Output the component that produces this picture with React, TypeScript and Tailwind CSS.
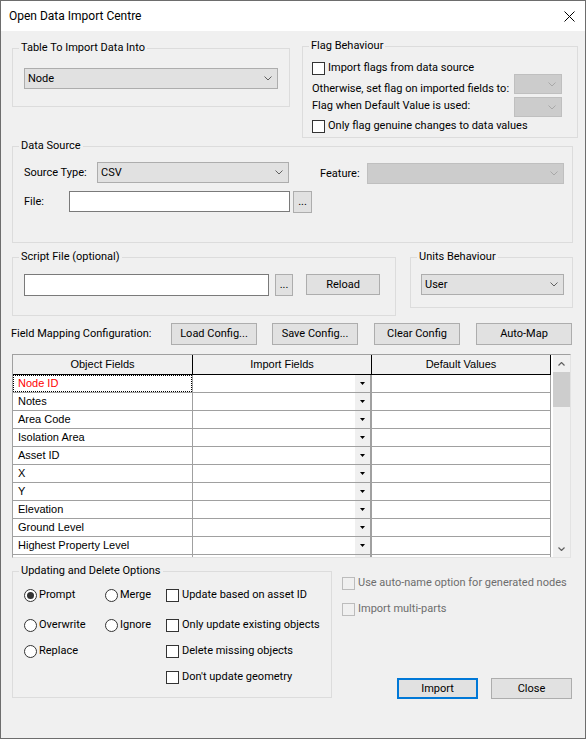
import React from "react";

const Chevron = ({ color = "#606060" }: { color?: string }) => (
  <svg width="8" height="5" viewBox="0 0 8 5" className="shrink-0">
    <path d="M0.5 0.5 L4 4 L7.5 0.5" fill="none" stroke={color} strokeWidth="1" />
  </svg>
);

function Combo({ className, text, disabled }: { className: string; text?: string; disabled?: boolean }) {
  return (
    <div
      className={
        "flex items-center justify-between border pl-[3px] pr-[5px] shrink-0 " +
        (disabled ? "bg-[#cccccc] border-[#bfbfbf] " : "bg-[#e1e1e1] border-[#adadad] ") +
        className
      }
    >
      <span className="leading-[16px] text-black">{text}</span>
      <Chevron color={disabled ? "#a8a8a8" : "#606060"} />
    </div>
  );
}

function Button({ className, children }: { className: string; children: React.ReactNode }) {
  return (
    <div
      className={
        "flex items-center justify-center bg-[#e1e1e1] border border-[#adadad] shrink-0 leading-[16px] " + className
      }
    >
      {children}
    </div>
  );
}

function Check({ label, className = "", disabled }: { label: string; className?: string; disabled?: boolean }) {
  return (
    <div className={"flex items-center h-[16px] " + className}>
      <div
        className={
          "w-[13px] h-[13px] border shrink-0 " +
          (disabled ? "border-[#bcbcbc] bg-[#f0f0f0]" : "border-[#333333] bg-white")
        }
      />
      <span className={"ml-[3px] leading-[16px] whitespace-nowrap " + (disabled ? "text-[#6d6d6d]" : "text-black")}>
        {label}
      </span>
    </div>
  );
}

function Radio({ label, className = "", checked }: { label: string; className?: string; checked?: boolean }) {
  return (
    <div className={"flex items-center h-[16px] " + className}>
      <div className="w-[13px] h-[13px] rounded-full border border-[#333333] bg-white shrink-0 flex items-center justify-center">
        {checked && <div className="w-[7px] h-[7px] rounded-full bg-[#333333]" />}
      </div>
      <span className="ml-[2px] leading-[16px] whitespace-nowrap">{label}</span>
    </div>
  );
}

const rows = [
  "Node ID",
  "Notes",
  "Area Code",
  "Isolation Area",
  "Asset ID",
  "X",
  "Y",
  "Elevation",
  "Ground Level",
  "Highest Property Level",
  "",
];

function Grid() {
  return (
    <div className="ml-[11px] mt-[9px] w-[559px] h-[204px] border border-t-[#a0a0a0] border-l-[#a0a0a0] border-r-[#e3e3e3] border-b-[#e3e3e3] flex overflow-hidden [font-family:'Liberation_Sans',Arial,sans-serif] text-[11px] text-black">
      <div className="w-[538px] flex flex-col overflow-hidden bg-white shrink-0">
        <div className="flex h-[20px] border-b border-black bg-[#f0f0f0] shrink-0">
          <div className="w-[180px] border-r border-black flex items-center justify-center">Object Fields</div>
          <div className="w-[179px] border-r border-black flex items-center justify-center">Import Fields</div>
          <div className="w-[179px] border-r border-black flex items-center justify-center">Default Values</div>
        </div>
        {rows.map((r, i) => (
          <div key={i} className="flex h-[18px] border-b border-[#a0a0a0] shrink-0">
            <div className="w-[180px] border-r border-[#a0a0a0] flex">
              {i === 0 ? (
                <div className="w-full h-full border border-dotted border-black flex items-center pl-[4px] text-[#ff0000]">
                  {r}
                </div>
              ) : (
                <div className="w-full h-full flex items-center pl-[5px]">{r}</div>
              )}
            </div>
            <div className="w-[179px] border-r border-[#a0a0a0] flex justify-end">
              <div className="w-[16px] h-full bg-[#f0f0f0] border-r border-[#a0a0a0] flex items-center justify-center">
                <svg width="5" height="3" viewBox="0 0 5 3">
                  <polygon points="0,0 5,0 2.5,3" fill="#000" />
                </svg>
              </div>
            </div>
            <div className="w-[179px] border-r border-[#a0a0a0]" />
          </div>
        ))}
      </div>
      <div className="w-[2px] bg-white shrink-0" />
      <div className="w-[17px] bg-[#f0f0f0] flex flex-col shrink-0">
        <div className="h-[17px] flex items-center justify-center shrink-0">
          <svg width="7" height="4" viewBox="0 0 7 4">
            <path d="M0.5 3.5 L3.5 0.5 L6.5 3.5" fill="none" stroke="#606060" strokeWidth="1.2" />
          </svg>
        </div>
        <div className="h-[35px] bg-[#cdcdcd] shrink-0" />
        <div className="flex-1" />
        <div className="h-[17px] flex items-center justify-center shrink-0">
          <svg width="7" height="4" viewBox="0 0 7 4">
            <path d="M0.5 0.5 L3.5 3.5 L6.5 0.5" fill="none" stroke="#606060" strokeWidth="1.2" />
          </svg>
        </div>
      </div>
    </div>
  );
}

export default function App() {
  return (
    <div className="w-[586px] h-[739px] bg-[#f0f0f0] border border-[#6d6d6d] flex flex-col [font-family:Roboto,sans-serif] text-[11px] text-black overflow-hidden">
      {/* Title bar */}
      <div className="h-[30px] bg-white flex items-center justify-between pl-[8px] pr-[10px] shrink-0">
        <span className="text-[12px] leading-[16px]">Open Data Import Centre</span>
        <svg width="11" height="11" viewBox="0 0 11 11">
          <path d="M0.5 0.5 L10.5 10.5 M10.5 0.5 L0.5 10.5" stroke="#000" strokeWidth="1" />
        </svg>
      </div>

      {/* Row 1 */}
      <div className="flex items-start shrink-0">
        <fieldset className="ml-[11px] mt-[9px] w-[278px] h-[67px] border border-[#dcdcdc]">
          <legend className="ml-[6px] px-[2px] leading-[16px]">Table To Import Data Into</legend>
          <Combo className="ml-[11px] mt-[12px] w-[254px] h-[21px]" text="Node" />
        </fieldset>
        <fieldset className="ml-[12px] mt-[7px] w-[276px] h-[100px] border border-[#dcdcdc]">
          <legend className="ml-[6px] px-[2px] leading-[16px]">Flag Behaviour</legend>
          <div className="pl-[9px] pr-[15px] flex flex-col">
            <div className="mt-[6px]">
              <Check label="Import flags from data source" />
            </div>
            <div className="flex items-start h-[20px] mt-[-2px]">
              <span className="flex-1 leading-[16px] pt-[7px] whitespace-nowrap">
                Otherwise, set flag on imported fields to:
              </span>
              <Combo className="w-[48px] h-[20px]" disabled />
            </div>
            <div className="flex items-start h-[20px] mt-[3px]">
              <span className="flex-1 leading-[16px] pt-[1px] whitespace-nowrap">Flag when Default Value is used:</span>
              <Combo className="w-[48px] h-[20px]" disabled />
            </div>
            <div className="mt-[1px]">
              <Check label="Only flag genuine changes to data values" />
            </div>
          </div>
        </fieldset>
      </div>

      {/* Data Source */}
      <fieldset className="ml-[11px] mt-[0px] w-[561px] h-[105px] border border-[#dcdcdc] shrink-0">
        <legend className="ml-[6px] px-[2px] leading-[16px]">Data Source</legend>
        <div className="pl-[11px] flex flex-col">
          <div className="flex items-start mt-[8px]">
            <span className="w-[73px] leading-[21px] whitespace-nowrap">Source Type:</span>
            <Combo className="w-[192px] h-[21px]" text="CSV" />
            <span className="ml-[31px] w-[47px] leading-[21px] mt-[1px]">Feature:</span>
            <Combo className="w-[197px] h-[21px] mt-[1px]" disabled />
          </div>
          <div className="flex items-start mt-[7px]">
            <span className="w-[45px] leading-[21px]">File:</span>
            <div className="w-[221px] h-[21px] bg-white border border-[#7a7a7a]" />
            <Button className="ml-[3px] w-[19px] h-[22px]">...</Button>
          </div>
        </div>
      </fieldset>

      {/* Row 3 */}
      <div className="flex items-start mt-[6px] shrink-0">
        <fieldset className="ml-[11px] w-[384px] h-[67px] border border-[#dcdcdc]">
          <legend className="ml-[6px] px-[2px] leading-[16px]">Script File (optional)</legend>
          <div className="pl-[11px] flex items-start mt-[9px]">
            <div className="w-[245px] h-[22px] bg-white border border-[#7a7a7a]" />
            <Button className="ml-[6px] w-[18px] h-[22px]">...</Button>
            <Button className="ml-[13px] w-[74px] h-[21px]">Reload</Button>
          </div>
        </fieldset>
        <fieldset className="ml-[14px] w-[163px] h-[59px] border border-[#dcdcdc]">
          <legend className="ml-[6px] px-[2px] leading-[16px]">Units Behaviour</legend>
          <Combo className="ml-[10px] mt-[9px] w-[143px] h-[21px]" text="User" />
        </fieldset>
      </div>

      {/* Field mapping */}
      <div className="flex items-center h-[22px] mt-[7px] shrink-0">
        <span className="ml-[10px] w-[160px] leading-[16px] whitespace-nowrap">Field Mapping Configuration:</span>
        <Button className="w-[86px] h-[22px]">Load Config...</Button>
        <Button className="ml-[15px] w-[86px] h-[22px]">Save Config...</Button>
        <Button className="ml-[16px] w-[86px] h-[22px]">Clear Config</Button>
        <Button className="ml-[16px] w-[96px] h-[22px]">Auto-Map</Button>
      </div>

      <Grid />

      {/* Bottom */}
      <div className="flex items-start mt-[5px] shrink-0">
        <fieldset className="ml-[11px] w-[320px] h-[135px] border border-[#dcdcdc]">
          <legend className="ml-[6px] px-[2px] leading-[16px]">Updating and Delete Options</legend>
          <div className="flex pl-[11px]">
            <div className="w-[81px] flex flex-col">
              <Radio label="Prompt" checked className="mt-[8px]" />
              <Radio label="Overwrite" className="mt-[14px]" />
              <Radio label="Replace" className="mt-[10px]" />
            </div>
            <div className="w-[61px] flex flex-col">
              <Radio label="Merge" className="mt-[8px]" />
              <Radio label="Ignore" className="mt-[14px]" />
            </div>
            <div className="flex flex-col">
              <Check label="Update based on asset ID" className="mt-[8px]" />
              <Check label="Only update existing objects" className="mt-[14px]" />
              <Check label="Delete missing objects" className="mt-[10px]" />
              <Check label="Don't update geometry" className="mt-[10px]" />
            </div>
          </div>
        </fieldset>
        <div className="ml-[10px] w-[230px] flex flex-col">
          <Check label="Use auto-name option for generated nodes" disabled className="mt-[12px]" />
          <Check label="Import multi-parts" disabled className="mt-[10px]" />
          <div className="flex justify-end gap-[13px] mt-[61px]">
            <div className="w-[81px] h-[21px] flex items-center justify-center bg-[#e1e1e1] border-2 border-[#0078d7] leading-[16px]">
              Import
            </div>
            <Button className="w-[81px] h-[21px]">Close</Button>
          </div>
        </div>
      </div>
    </div>
  );
}
